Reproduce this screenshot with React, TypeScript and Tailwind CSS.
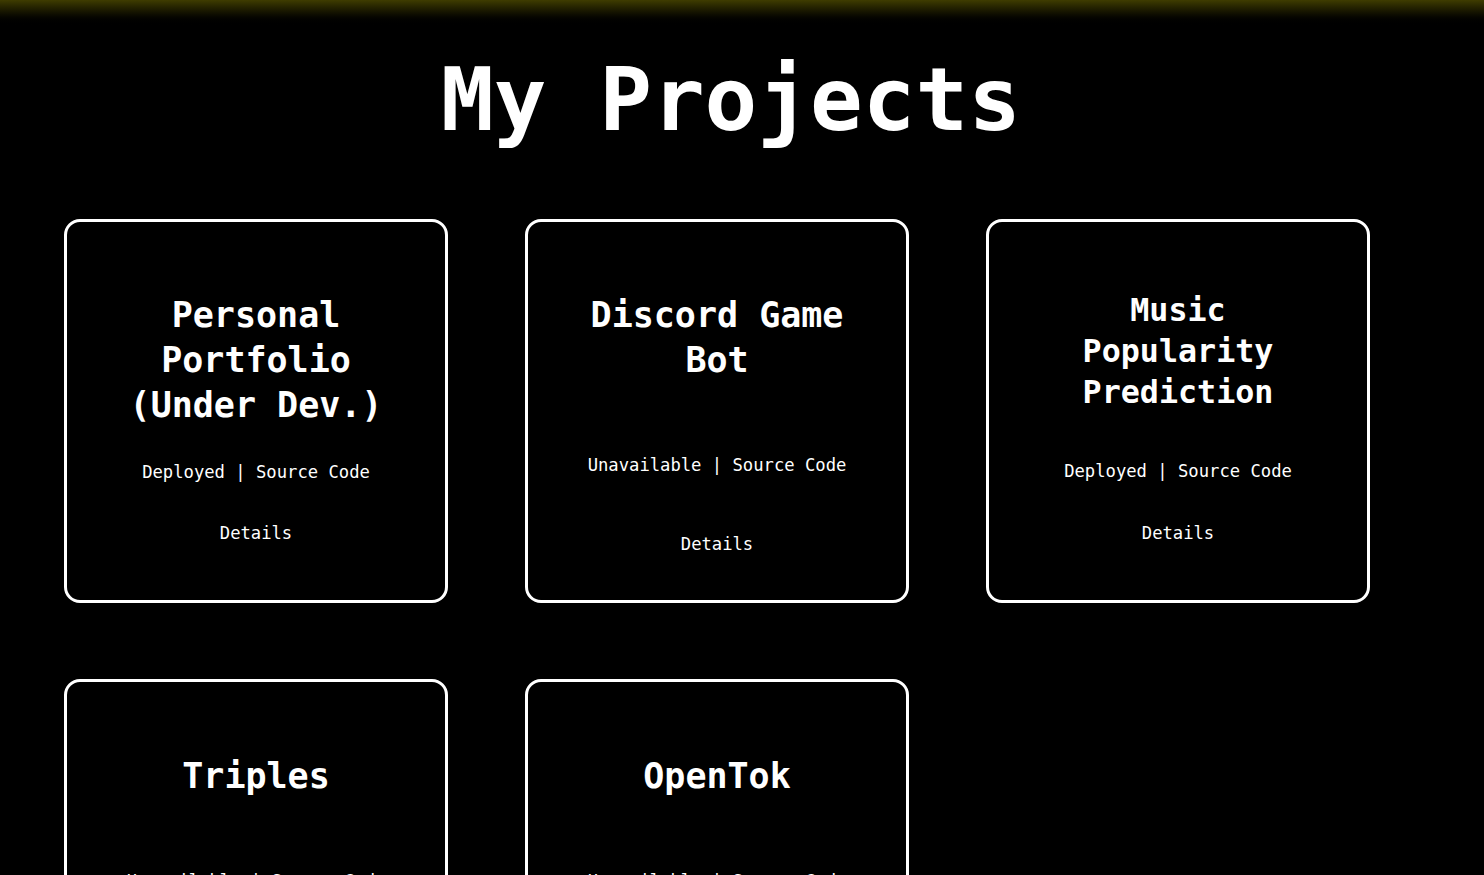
const mono = "font-['DejaVu_Sans_Mono','Liberation_Mono',monospace]";

type Project = {
  title: string[];
  live: string;
  // spacing per card, written out in full
  pad: string;
  titleSize: string;
  linksGap: string;
  detailsGap: string;
};

const projects: Project[] = [
  {
    title: ['Personal', 'Portfolio', '(Under Dev.)'],
    live: 'Deployed',
    pad: 'pt-[71px]',
    titleSize: 'text-[35px] leading-[45px]',
    linksGap: 'mt-[32px]',
    detailsGap: 'mt-[37px]',
  },
  {
    title: ['Discord Game', 'Bot'],
    live: 'Unavailable',
    pad: 'pt-[71px]',
    titleSize: 'text-[35px] leading-[45px]',
    linksGap: 'mt-[70px]',
    detailsGap: 'mt-[55px]',
  },
  {
    title: ['Music', 'Popularity', 'Prediction'],
    live: 'Deployed',
    pad: 'pt-[68px]',
    titleSize: 'text-[31.7px] leading-[41px]',
    linksGap: 'mt-[46px]',
    detailsGap: 'mt-[38px]',
  },
  {
    title: ['Triples'],
    live: 'Unavailable',
    pad: 'pt-[72px]',
    titleSize: 'text-[35px] leading-[45px]',
    linksGap: 'mt-[70px]',
    detailsGap: 'mt-[55px]',
  },
  {
    title: ['OpenTok'],
    live: 'Unavailable',
    pad: 'pt-[72px]',
    titleSize: 'text-[35px] leading-[45px]',
    linksGap: 'mt-[70px]',
    detailsGap: 'mt-[55px]',
  },
];

function ProjectCard({ project }: { project: Project }) {
  return (
    <div
      className={`w-[384px] h-[384px] shrink-0 border-[3px] border-white rounded-[16px] bg-black flex flex-col items-center text-center ${project.pad}`}
    >
      <h2 className={`font-bold text-white ${project.titleSize}`}>
        {project.title.map((line) => (
          <div key={line}>{line}</div>
        ))}
      </h2>
      <p className={`text-white text-[17.2px] leading-[24px] ${project.linksGap}`}>
        <a href="#" className="hover:underline">
          {project.live}
        </a>
        {' | '}
        <a href="#" className="hover:underline">
          Source Code
        </a>
      </p>
      <p className={`text-white text-[17.2px] leading-[24px] ${project.detailsGap}`}>
        <a href="#" className="hover:underline">
          Details
        </a>
      </p>
    </div>
  );
}

export default function App() {
  return (
    <div className={`min-h-screen bg-black overflow-hidden ${mono}`}>
      <div className="h-[26px] bg-gradient-to-b from-[#3f3c00] to-black" />
      <h1 className="mt-[30px] pr-[22px] text-center text-[87.6px] leading-[89px] font-bold text-white">
        My Projects
      </h1>
      <div className="mt-[74px] ml-[64px] w-[1306px] flex flex-wrap gap-x-[77px] gap-y-[76px] pb-16">
        {projects.map((p) => (
          <ProjectCard key={p.title.join(' ')} project={p} />
        ))}
      </div>
    </div>
  );
}
